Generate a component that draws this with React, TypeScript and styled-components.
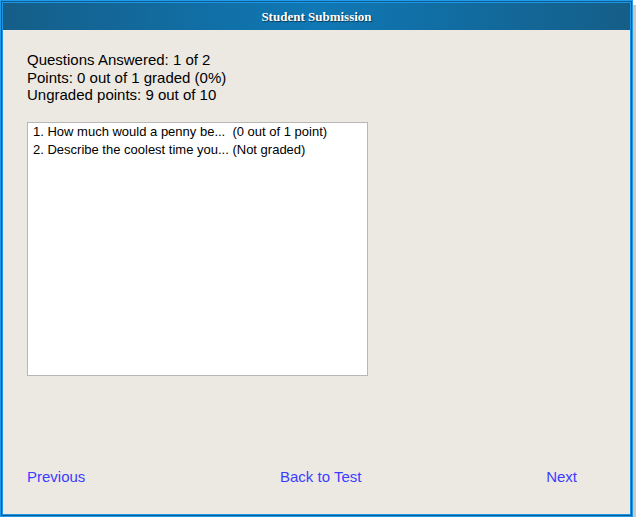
import * as React from "react";
import styled, { createGlobalStyle } from "styled-components";

const GlobalStyle = createGlobalStyle`
    html, body {
        margin: 0;
        padding: 0;
        background: #ffffff;
    }
`;

const Frame = styled.div`
    box-sizing: border-box;
    width: 633px;
    height: 517px;
    padding: 1px;

    border: 1px solid #1f9be9;
    background: #0c5d94;
    box-shadow: 3px 5px 0 #c9c9c9;
`;

const Window = styled.div`
    box-sizing: border-box;
    display: flex;
    flex-direction: column;
    height: 100%;

    border: 1px solid #1e95e4;
    background: #ece9e3;
`;

const TitleBar = styled.div`
    display: flex;
    align-items: center;
    justify-content: center;
    height: 27px;

    background: linear-gradient(to right, #155e88 0%, #0f78b5 50%, #155e88 100%);
    color: #ffffff;

    font-family: "Liberation Serif", "DejaVu Serif", serif;
    font-size: 13px;
    font-weight: bold;
    text-shadow: 1px 1px 1px rgba(0, 0, 0, 0.55);
`;

const Body = styled.div`
    display: flex;
    flex: 1;
    flex-direction: column;
    padding: 21px 27px 29px 24px;

    color: #000000;

    font-family: "Liberation Sans", Arial, sans-serif;
`;

const Stats = styled.div`
    font-size: 15px;
    line-height: 17.5px;
`;

const QuestionList = styled.div`
    box-sizing: border-box;
    width: 341px;
    height: 254px;
    margin-top: 18px;
    padding: 0 5px;

    border: 1px solid #b7b7b7;
    background: #ffffff;

    font-size: 13px;
    line-height: 18.6px;
`;

const Item = styled.div`
    white-space: pre;
`;

const Nav = styled.div`
    display: grid;
    grid-template-columns: 253px 1fr auto;
    margin-top: auto;
    padding-right: 26px;

    font-size: 15px;
    line-height: 17.5px;
`;

const NavLink = styled.a<{ $align?: "start" | "end" }>`
    justify-self: ${(p) => p.$align ?? "start"};

    color: #3c3cff;
    text-decoration: none;
    cursor: pointer;
`;

const questions = [
    "1. How much would a penny be...  (0 out of 1 point)",
    "2. Describe the coolest time you... (Not graded)",
];

export default function App() {
    return (
        <>
            <GlobalStyle />
            <Frame>
                <Window>
                    <TitleBar>Student Submission</TitleBar>
                    <Body>
                        <Stats>
                            <div>Questions Answered: 1 of 2</div>
                            <div>Points: 0 out of 1 graded (0%)</div>
                            <div>Ungraded points: 9 out of 10</div>
                        </Stats>

                        <QuestionList>
                            {questions.map((q, i) => <Item key={i}>{q}</Item>)}
                        </QuestionList>

                        <Nav>
                            <NavLink>Previous</NavLink>
                            <NavLink>Back to Test</NavLink>
                            <NavLink $align="end">Next</NavLink>
                        </Nav>
                    </Body>
                </Window>
            </Frame>
        </>
    );
}
